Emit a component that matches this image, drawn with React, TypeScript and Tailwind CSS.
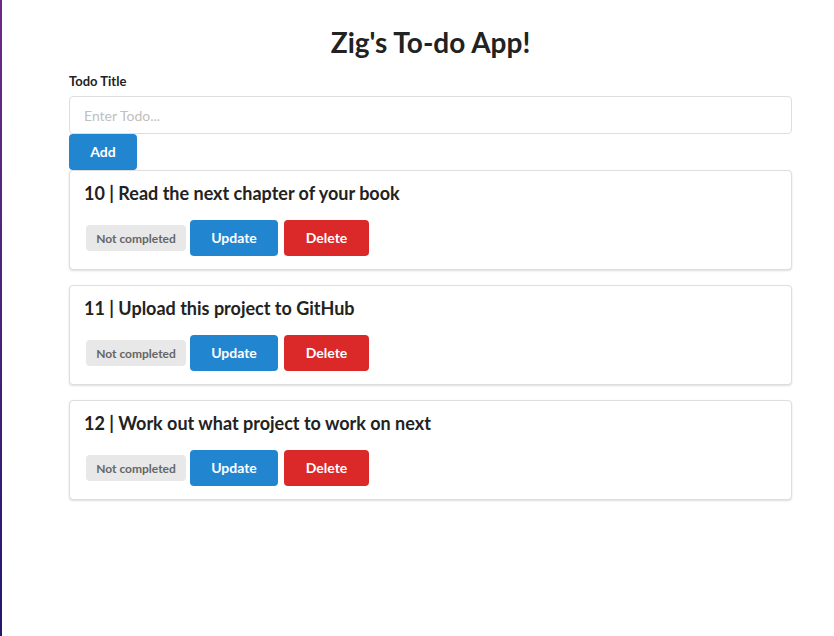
const todos = [
  { id: 10, title: 'Read the next chapter of your book' },
  { id: 11, title: 'Upload this project to GitHub' },
  { id: 12, title: 'Work out what project to work on next' },
];

function TodoCard({ id, title }: { id: number; title: string }) {
  return (
    <div className="rounded-[4px] border border-[#dedede] bg-white px-[14px] pt-[11px] pb-[13px] shadow-[0_1px_2px_0_rgba(34,36,38,0.15)]">
      <h3 className="text-[18px] leading-[23px] font-bold text-[#222]">
        {id} | {title}
      </h3>
      <div className="mt-[15px] flex items-center">
        <span className="ml-[2px] flex h-[26px] w-[100px] items-center justify-center rounded-[4px] bg-[#e8e8e8] pt-[2px] text-[12px] font-bold text-[#666]">
          Not completed
        </span>
        <button className="ml-[4px] h-[36px] w-[88px] rounded-[4px] bg-[#2185d0] pb-[2px] text-[14px] font-bold text-white">
          Update
        </button>
        <button className="ml-[6px] h-[36px] w-[85px] rounded-[4px] bg-[#db2828] pb-[2px] text-[14px] font-bold text-white">
          Delete
        </button>
      </div>
    </div>
  );
}

export default function App() {
  return (
    <div className="flex min-h-screen bg-white font-['Lato','Liberation_Sans',sans-serif]">
      <div className="w-[2px] shrink-0 bg-gradient-to-b from-[#6c2a87] to-[#25176a]" />
      <div className="ml-[67px] w-[723px] pt-[24px]">
        <h1 className="text-center text-[28px] leading-[36px] font-bold text-[#222]">Zig's To-do App!</h1>
        <label className="mt-[13px] block text-[13px] leading-[17px] font-bold text-[#222]">Todo Title</label>
        <input
          className="mt-[6px] block h-[38px] w-full rounded-[4px] border border-[#dedede] px-[14px] text-[14px] text-[#222] outline-none placeholder:text-[#c0c0c0]"
          placeholder="Enter Todo..."
        />
        <button className="block h-[36px] w-[68px] rounded-[4px] bg-[#2185d0] pb-[2px] text-[14px] font-bold text-white">
          Add
        </button>
        <div className="flex flex-col gap-[15px]">
          {todos.map((t) => (
            <TodoCard key={t.id} id={t.id} title={t.title} />
          ))}
        </div>
      </div>
    </div>
  );
}
